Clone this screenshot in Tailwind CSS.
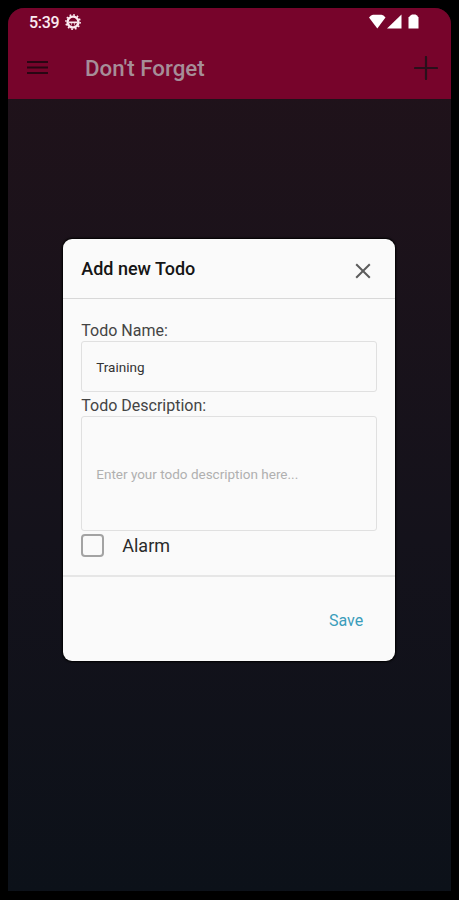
<!DOCTYPE html>
<html lang="en">
<head>
  <meta charset="UTF-8" />
  <meta name="viewport" content="width=device-width, initial-scale=1" />
  <title>Don't Forget</title>
  <script src="https://cdn.jsdelivr.net/npm/@tailwindcss/browser@4"></script>
</head>
<body class="bg-black h-screen overflow-hidden pt-2 pb-[9px] pl-2 pr-[8.5px] font-['Roboto',sans-serif]">

  <!-- Phone screen -->
  <div class="relative h-full rounded-t-2xl overflow-hidden bg-linear-to-b from-[#21121a] via-[#14121b] via-60% to-[#0c1119]">

    <header class="bg-[#77042b] h-[91px]">
      <!-- Status bar -->
      <div class="flex items-center justify-between h-7 pl-[21px] pr-8 text-white">
        <div class="flex items-center gap-1.5">
          <span class="pt-0.5 text-[16px] font-medium tracking-[-0.3px] text-[#fbeaf0]">5:39</span>
          <svg class="size-4" viewBox="0 0 16 16" fill="none" stroke="#fbeaf0">
            <circle cx="8" cy="8" r="5.4" stroke-width="2.4" />
            <circle cx="8" cy="8" r="7.1" stroke-width="1.6" stroke-dasharray="1.7 2.02" />
            <path d="M4 8.400h8" stroke-width="1.600" />
            <path d="M6.500 11.500V9M9.500 11.500V9" stroke-width="1" stroke-opacity=".6" />
          </svg>
        </div>
        <div class="flex items-center">
          <svg class="w-[50px] h-4" viewBox="0 0 50 16" fill="#fff">
            <path d="M0 3.500Q2 0.800 4 0.800H12.500Q14.500 0.800 16.500 3.500L8.300 14.500Z" />
            <path d="M18 14.500L32.500 0.500V14.500Z" />
            <path d="M39.500 14.500V3.500L41.500 1.500L43 0.500H46.500L48 1.500L49.500 3.500V14.500Z" />
          </svg>
        </div>
      </div>
      <!-- App bar -->
      <div class="flex items-center h-[63px] pl-[19px] pr-[13px]">
        <svg class="w-[21px] h-4" viewBox="0 0 21 16" stroke="#290613" stroke-width="2">
          <path d="M0 2h21M0 7.500h21M0 13h21" />
        </svg>
        <h1 class="ml-[37px] text-[22.3px] leading-7 font-medium text-[#a68e98]">Don't Forget</h1>
        <svg class="ml-auto size-6" viewBox="0 0 24 24" stroke="#29101b" stroke-width="2.2" stroke-linecap="round">
          <path d="M12 1v22M1 12h22" />
        </svg>
      </div>
    </header>

    <!-- Modal -->
    <div class="absolute inset-0 flex items-center justify-center">
      <form class="w-[332px] h-[422px] rounded-[9px] bg-[#fafafa] shadow-[0_0_2px_1px_#000] flex flex-col text-[#444]">
        <div class="flex items-center justify-between h-[60px] pl-[18px] pr-6 border-b border-[#d8d8d8]">
          <h2 class="text-[18px] font-medium text-[#151515]">Add new Todo</h2>
          <svg class="size-4 mt-1.5" viewBox="0 0 16 16" stroke="#5c5c5c" stroke-width="2">
            <path d="M1.200 1.200l13.600 13.600M14.800 1.200L1.200 14.800" />
          </svg>
        </div>

        <div class="h-[278px] px-[18px] pt-5 border-b-2 border-[#e6e6e6]">
          <label for="todoName" class="block h-[22px] leading-6 text-[16px]">Todo Name:</label>
          <input id="todoName" type="text" value="Training" class="block w-full h-[51px] px-[14px] pt-0.5 border border-[#e0e0e0] rounded-[3px] text-[13.5px] text-[#333]" />
          <label for="todoDescription" class="block h-6 leading-[27px] text-[16px]">Todo Description:</label>
          <input id="todoDescription" type="text" placeholder="Enter your todo description here..." class="block w-full h-[115px] px-[14px] pt-0.5 border border-[#e0e0e0] rounded-[3px] text-[13.5px] placeholder:text-[#b0b0b0]" />
          <div class="flex items-center gap-[18px] h-[29px]">
            <input id="alarm" type="checkbox" class="appearance-none size-[23px] border-2 border-[#a3a3a3] rounded-[4px]" />
            <label for="alarm" class="text-[18px] leading-6 text-[#2a2a2a] pt-0.5">Alarm</label>
          </div>
        </div>

        <div class="grow flex items-center justify-end pr-8 pt-1">
          <button type="button" class="text-[16px] text-[#3a9dbb]">Save</button>
        </div>
      </form>
    </div>
  </div>

</body>
</html>
